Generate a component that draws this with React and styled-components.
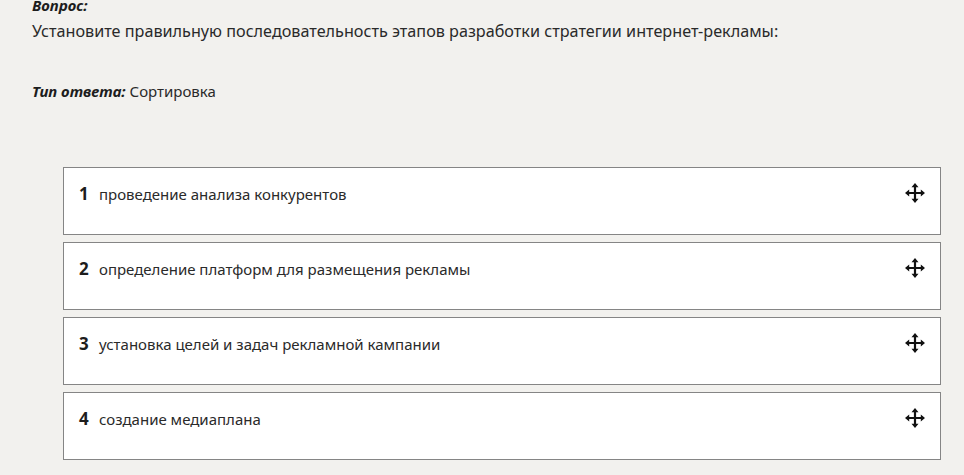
import React from 'react';
import styled, { createGlobalStyle } from 'styled-components';

const GlobalStyle = createGlobalStyle`
  html, body {
    margin: 0;
    padding: 0;
    background: #f2f1ee;
  }
  body {
    font-family: "Noto Sans", "Open Sans", sans-serif;
    color: #222;
  }
`;

const Page = styled.div`
  padding: 0 24px 0 32px;
  margin-top: -8px;
`;

const Label = styled.div`
  font-size: 15px;
  line-height: 26px;
  font-weight: 700;
  font-style: italic;
  color: #1d1d1d;
`;

const Question = styled.div`
  font-size: 16.2px;
  line-height: 26px;
  color: #2a2a2a;
`;

const AnswerType = styled.div`
  margin-top: 34px;
  font-size: 15px;
  line-height: 26px;
  color: #2a2a2a;

  b {
    font-style: italic;
    color: #1d1d1d;
  }
`;

const List = styled.div`
  display: flex;
  flex-direction: column;
  gap: 7px;
  margin: 63px 0 0 31px;
  width: 878px;
`;

const Card = styled.div`
  display: flex;
  align-items: flex-start;
  height: 68px;
  box-sizing: border-box;
  padding: 15px 14px 0 15px;
  background: #fff;
  border: 1px solid #858585;
`;

const Num = styled.span`
  font-size: 17px;
  font-weight: 700;
  line-height: 22px;
  width: 20px;
  color: #1d1d1d;
`;

const Text = styled.span`
  flex: 1;
  font-size: 15px;
  line-height: 22px;
  color: #2a2a2a;
`;

const Handle = styled.span`
  display: flex;
  margin-top: -1px;
  cursor: move;
`;

function MoveIcon() {
  return (
    <svg width="22" height="22" viewBox="0 0 22 22">
      <path d="M11 4V18M4 11H18" stroke="#111" strokeWidth="2.2" />
      <path d="M11 1L7.5 5.2H14.5Z M11 21L7.5 16.8H14.5Z M1 11L5.2 7.5V14.5Z M21 11L16.8 7.5V14.5Z" fill="#111" />
    </svg>
  );
}

const items = [
  'проведение анализа конкурентов',
  'определение платформ для размещения рекламы',
  'установка целей и задач рекламной кампании',
  'создание медиаплана',
];

export default function App() {
  return (
    <>
      <GlobalStyle />
      <Page>
        <Label>Вопрос:</Label>
        <Question>
          Установите правильную последовательность этапов разработки стратегии интернет-рекламы:
        </Question>
        <AnswerType>
          <b>Тип ответа:</b> Сортировка
        </AnswerType>
        <List>
          {items.map((t, i) => (
            <Card key={i}>
              <Num>{i + 1}</Num>
              <Text>{t}</Text>
              <Handle>
                <MoveIcon />
              </Handle>
            </Card>
          ))}
        </List>
      </Page>
    </>
  );
}
